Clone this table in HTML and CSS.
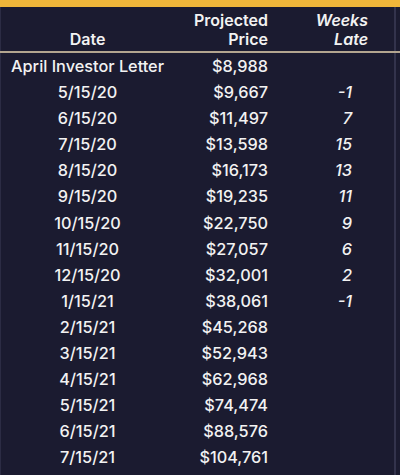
FILE: index.html
```html
<!DOCTYPE html>
<html>
<head>
<meta charset="utf-8">
<link rel="stylesheet" href="styles.css">
</head>
<body>
<div class="page">
  <div class="topband"></div>
  <div class="table">
    <div class="head">
      <div class="c-date">Date</div>
      <div class="c-price">Projected<br>Price</div>
      <div class="c-weeks">Weeks<br>Late</div>
    </div>
    <div class="rows">
      <div class="row"><div class="c-date">April Investor Letter</div><div class="c-price">$8,988</div><div class="c-wk"></div></div>
      <div class="row"><div class="c-date">5/15/20</div><div class="c-price">$9,667</div><div class="c-wk">-1</div></div>
      <div class="row"><div class="c-date">6/15/20</div><div class="c-price">$11,497</div><div class="c-wk">7</div></div>
      <div class="row"><div class="c-date">7/15/20</div><div class="c-price">$13,598</div><div class="c-wk">15</div></div>
      <div class="row"><div class="c-date">8/15/20</div><div class="c-price">$16,173</div><div class="c-wk">13</div></div>
      <div class="row"><div class="c-date">9/15/20</div><div class="c-price">$19,235</div><div class="c-wk">11</div></div>
      <div class="row"><div class="c-date">10/15/20</div><div class="c-price">$22,750</div><div class="c-wk">9</div></div>
      <div class="row"><div class="c-date">11/15/20</div><div class="c-price">$27,057</div><div class="c-wk">6</div></div>
      <div class="row"><div class="c-date">12/15/20</div><div class="c-price">$32,001</div><div class="c-wk">2</div></div>
      <div class="row"><div class="c-date">1/15/21</div><div class="c-price">$38,061</div><div class="c-wk">-1</div></div>
      <div class="row"><div class="c-date">2/15/21</div><div class="c-price">$45,268</div><div class="c-wk"></div></div>
      <div class="row"><div class="c-date">3/15/21</div><div class="c-price">$52,943</div><div class="c-wk"></div></div>
      <div class="row"><div class="c-date">4/15/21</div><div class="c-price">$62,968</div><div class="c-wk"></div></div>
      <div class="row"><div class="c-date">5/15/21</div><div class="c-price">$74,474</div><div class="c-wk"></div></div>
      <div class="row"><div class="c-date">6/15/21</div><div class="c-price">$88,576</div><div class="c-wk"></div></div>
      <div class="row"><div class="c-date">7/15/21</div><div class="c-price">$104,761</div><div class="c-wk"></div></div>
    </div>
  </div>
</div>
</body>
</html>
```
FILE: styles.css
```css
html, body {
  margin: 0;
  padding: 0;
  background: #1b1b30;
}
body {
  width: 400px;
  height: 475px;
  overflow: hidden;
  font-family: Inter, "Liberation Sans", sans-serif;
  color: #f2f2f2;
}
.page {
  height: 475px;
  border-left: 1px solid #2c2c44;
  border-right: 2px solid #33334c;
  margin-right: 4px;
  box-sizing: border-box;
}
.topband {
  height: 7px;
  background: #f0b63a;
  margin-right: -6px;
  margin-left: -1px;
}
.head, .row {
  display: grid;
  grid-template-columns: 173px 94px 100px;
}
.head {
  font-weight: 600;
  font-size: 16px;
  line-height: 19px;
  padding-top: 4px;
  height: 46px;
  box-sizing: border-box;
  border-bottom: 2px solid #b3a58f;
  margin-right: -6px;
  margin-left: -1px;
  padding-left: 1px;
}
.head .c-date {
  text-align: center;
  align-self: end;
  padding-bottom: 2px;
}
.head .c-price {
  text-align: right;
}
.head .c-weeks {
  text-align: right;
  font-style: italic;
}
.row {
  height: 26.1px;
  align-items: center;
  font-size: 16.3px;
  font-weight: 500;
}
.row:first-child {
  height: 26px;
}
.row .c-date {
  text-align: center;
}
.row .c-price {
  text-align: right;
}
.row .c-wk {
  text-align: right;
  padding-right: 16px;
  font-style: italic;
}
```
